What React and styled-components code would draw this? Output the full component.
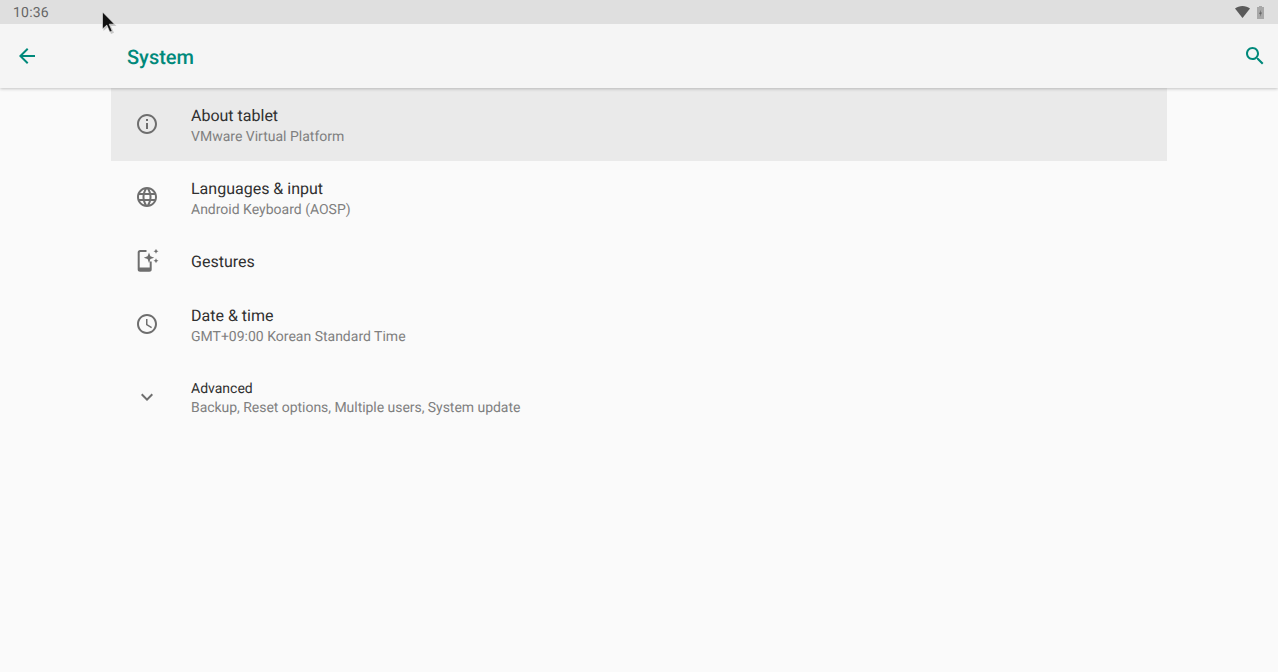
import React from 'react';
import styled, { createGlobalStyle } from 'styled-components';

const GlobalStyle = createGlobalStyle`
  html, body {
    margin: 0;
    padding: 0;
    background: #fafafa;
    font-family: Roboto, "Liberation Sans", sans-serif;
    text-rendering: geometricPrecision;
  }
`;

const Screen = styled.div`
  position: relative;
  width: 1278px;
  height: 672px;
  overflow: hidden;
  background: #fafafa;
`;

const StatusBar = styled.div`
  position: relative;
  z-index: 2;
  display: flex;
  align-items: center;
  justify-content: space-between;
  height: 24px;
  padding: 0 14px 0 13px;
  background: #dfdfdf;
  color: #666666;
  font-size: 14px;
  letter-spacing: 0.2px;
`;

const StatusClock = styled.span`
  padding-top: 2px;
`;

const StatusIcons = styled.div`
  display: flex;
  align-items: center;
  gap: 7px;
`;

const Toolbar = styled.header`
  position: relative;
  z-index: 1;
  display: flex;
  align-items: center;
  height: 64px;
  background: #f5f5f5;
  box-shadow: 0 1px 3px rgba(0, 0, 0, 0.22);
  color: #00897b;
`;

const BackSlot = styled.div`
  display: flex;
  width: 127px;
  padding-left: 15px;
  box-sizing: border-box;
  margin-top: -1px;
`;

const Title = styled.h1`
  flex: 1;
  margin: 0;
  padding-top: 2px;
  font-size: 20px;
  font-weight: 500;
  line-height: 64px;
  color: #00897b;
`;

const SearchSlot = styled.div`
  display: flex;
  padding-right: 11px;
`;

const List = styled.div`
  display: flex;
  flex-direction: column;
  margin: 0 111px;
`;

const Row = styled.div`
  display: flex;
  align-items: center;
  height: ${p => p.$height}px;
  padding-left: 24px;
  background: ${p => (p.$selected ? '#eaeaea' : 'transparent')};
`;

const IconSlot = styled.div`
  display: flex;
  width: 56px;
  flex: none;
  margin-top: ${p => -(p.$raise || 0)}px;
  color: #6e6e6e;
`;

const RowText = styled.div`
  display: flex;
  flex-direction: column;
  padding-top: ${p => p.$pad}px;
`;

const RowTitle = styled.div`
  font-size: ${p => (p.$small ? 14 : 16)}px;
  line-height: ${p => (p.$small ? 18 : 21)}px;
  color: #303030;
`;

const RowSummary = styled.div`
  margin-top: ${p => (p.$small ? 0 : 1)}px;
  font-size: 14px;
  line-height: 21px;
  letter-spacing: ${p => (p.$small ? '-0.04px' : 'normal')};
  color: #808080;
`;

const Cursor = styled.svg`
  position: absolute;
  z-index: 3;
  left: 100px;
  top: 10px;
`;

const Icon = ({ d, size = 24 }) => (
  <svg width={size} height={size} viewBox="0 0 24 24" fill="currentColor">
    <path d={d} />
  </svg>
);

const paths = {
  back: 'M20 11H7.83l5.59-5.59L12 4l-8 8 8 8 1.41-1.41L7.83 13H20v-2z',
  search:
    'M15.5 14h-.79l-.28-.27C15.41 12.59 16 11.11 16 9.5 16 5.91 13.09 3 9.5 3S3 5.91 3 9.5 5.91 16 9.5 16c1.61 0 3.09-.59 4.23-1.57l.27.28v.79l5 4.99L20.49 19l-4.99-5zm-6 0C7.01 14 5 11.99 5 9.5S7.01 5 9.5 5 14 7.01 14 9.5 11.99 14 9.5 14z',
  info:
    'M11 7h2v2h-2zm0 4h2v6h-2zm1-9C6.48 2 2 6.48 2 12s4.48 10 10 10 10-4.48 10-10S17.52 2 12 2zm0 18c-4.41 0-8-3.59-8-8s3.59-8 8-8 8 3.59 8 8-3.59 8-8 8z',
  globe:
    'M11.99 2C6.47 2 2 6.48 2 12s4.47 10 9.99 10C17.52 22 22 17.52 22 12S17.52 2 11.99 2zm6.93 6h-2.95c-.32-1.25-.78-2.45-1.38-3.56 1.84.63 3.37 1.91 4.33 3.56zM12 4.04c.83 1.2 1.48 2.53 1.91 3.96h-3.82c.43-1.43 1.08-2.76 1.91-3.96zM4.26 14C4.1 13.36 4 12.69 4 12s.1-1.36.26-2h3.38c-.08.66-.14 1.32-.14 2 0 .68.06 1.34.14 2H4.26zm.82 2h2.95c.32 1.25.78 2.45 1.38 3.56-1.84-.63-3.37-1.9-4.33-3.56zm2.95-8H5.08c.96-1.66 2.49-2.93 4.33-3.56C8.81 5.55 8.35 6.75 8.03 8zM12 19.96c-.83-1.2-1.48-2.53-1.91-3.96h3.82c-.43 1.43-1.08 2.76-1.91 3.96zM14.34 14H9.66c-.09-.66-.16-1.32-.16-2 0-.68.07-1.35.16-2h4.68c.09.65.16 1.32.16 2 0 .68-.07 1.34-.16 2zm.25 5.56c.6-1.11 1.06-2.31 1.38-3.56h2.95c-.96 1.65-2.49 2.93-4.33 3.56zM16.36 14c.08-.66.14-1.32.14-2 0-.68-.06-1.34-.14-2h3.38c.16.64.26 1.31.26 2s-.1 1.36-.26 2h-3.38z',
  gestures:
    'M5 1h6.5v2H5.5c-.5 0-.8.3-.8.8v14.7h10v-6h2v8c0 1.3-1 2.3-2.3 2.3H5c-1.3 0-2.3-1-2.3-2.3V3.3C2.7 2 3.7 1 5 1zM14 3.5l1.4 3.8 3.8 1.4-3.8 1.4-1.4 3.8-1.4-3.8-3.8-1.4 3.8-1.4zM21 -.2l.8 1.7 1.7.8-1.7.8-.8 1.7-.8-1.7-1.7-.8 1.7-.8zM21 9.2l.8 1.7 1.7.8-1.7.8-.8 1.7-.8-1.7-1.7-.8 1.7-.8z',
  clock:
    'M11.99 2C6.47 2 2 6.48 2 12s4.47 10 9.99 10C17.52 22 22 17.52 22 12S17.52 2 11.99 2zM12 20c-4.42 0-8-3.58-8-8s3.58-8 8-8 8 3.58 8 8-3.58 8-8 8zm.5-13H11v6l5.25 3.15.75-1.23-4.5-2.67z',
  expand: 'M16.59 8.59L12 13.17 7.41 8.59 6 10l6 6 6-6z',
};

const rows = [
  { icon: 'info', title: 'About tablet', summary: 'VMware Virtual Platform', height: 73, selected: true, raise: 1, pad: 3 },
  { icon: 'globe', title: 'Languages & input', summary: 'Android Keyboard (AOSP)', height: 72, pad: 4 },
  { icon: 'gestures', title: 'Gestures', height: 56, pad: 0 },
  { icon: 'clock', title: 'Date & time', summary: 'GMT+09:00 Korean Standard Time', height: 72, raise: 2, pad: 2 },
  {
    icon: 'expand',
    title: 'Advanced',
    summary: 'Backup, Reset options, Multiple users, System update',
    height: 72,
    small: true,
    pad: 5,
  },
];

const App = () => (
  <Screen>
    <GlobalStyle />
    <StatusBar>
      <StatusClock>10:36</StatusClock>
      <StatusIcons>
        <svg width="15" height="12" viewBox="0 0 15 12" fill="#5a5a5a">
          <path d="M0 2.6C2 0.9 4.7 0 7.5 0S13 0.9 15 2.6L7.5 12z" />
        </svg>
        <svg width="7" height="13" viewBox="0 0 7 13">
          <path d="M2 0h3v1h2v12H0V1h2z" fill="#a8a8a8" />
          <path d="M4.2 3.5L2 8h1.4L2.9 11 5 6.5H3.6z" fill="#666666" />
        </svg>
      </StatusIcons>
    </StatusBar>
    <Toolbar>
      <BackSlot>
        <Icon d={paths.back} />
      </BackSlot>
      <Title>System</Title>
      <SearchSlot>
        <Icon d={paths.search} />
      </SearchSlot>
    </Toolbar>
    <List>
      {rows.map(row => (
        <Row key={row.title} $height={row.height} $selected={row.selected}>
          <IconSlot $raise={row.raise}>
            <Icon d={paths[row.icon]} />
          </IconSlot>
          <RowText $pad={row.pad}>
            <RowTitle $small={row.small}>{row.title}</RowTitle>
            {row.summary && <RowSummary $small={row.small}>{row.summary}</RowSummary>}
          </RowText>
        </Row>
      ))}
    </List>
    <Cursor width="18" height="26" viewBox="0 0 18 26">
      <path d="M2.5 2v18l4.5-4 3 7 3-1.3-3-6.7h5.5z" fill="rgba(0,0,0,0.18)" transform="translate(1 1)" />
      <path d="M2.5 2v17l4.3-3.9 3 6.9 2.4-1-3-6.8h5.3z" fill="#111" stroke="#eee" strokeWidth="0.6" />
    </Cursor>
  </Screen>
);

export default App;
